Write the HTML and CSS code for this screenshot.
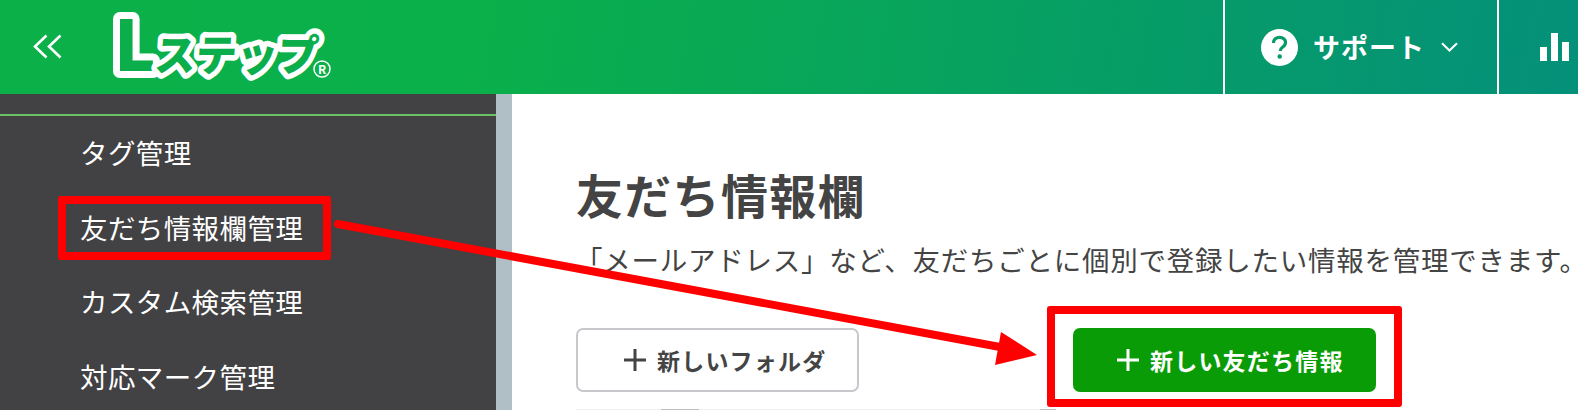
FILE: index.html
```html
<!DOCTYPE html>
<html lang="ja">
<head>
    <meta charset="UTF-8">
    <meta name="viewport" content="width=device-width, initial-scale=1.0">
    <title>友だち情報欄</title>
    <link rel="stylesheet" href="styles.css">
</head>
<body>
    <header class="topbar">
        <button class="collapse-btn" type="button" aria-label="閉じる">
            <svg width="30" height="25" viewBox="0 0 30 25" fill="none" stroke="#fff" stroke-width="2.6">
                <path d="M13.5 1.5 2 12.5l11.5 11"/>
                <path d="M27.5 1.5 16 12.5l11.5 11"/>
            </svg>
        </button>
        <svg class="logo" width="222" height="68" viewBox="0 0 222 68">
            <text class="logo-mark" x="2" y="59">L</text>
            <text class="logo-kana" x="46" y="59" transform="skewX(-4)" textLength="164" lengthAdjust="spacingAndGlyphs">ステップ</text>
            <circle cx="210" cy="57" r="8" fill="none" stroke="#fff" stroke-width="1.500"/>
            <text class="logo-reg" x="206" y="61.500">R</text>
        </svg>
        <div class="topbar-cell support-cell">
            <svg width="37" height="37" viewBox="0 0 37 37">
                <circle cx="18.5" cy="18.5" r="18.5" fill="#fff"/>
                <path d="M12.5 14c0-3.6 2.6-5.7 6-5.7s6 2 6 5.1c0 2.6-1.500 3.800-3 4.900-1.500 1.100-2.300 1.900-2.300 3.700" fill="none" stroke="#069a6a" stroke-width="3.200"/>
                <circle cx="18.700" cy="27.500" r="2.200" fill="#069a6a"/>
            </svg>
            <span class="support-label">サポート</span>
            <svg class="chevron" width="17" height="10" viewBox="0 0 17 10" fill="none" stroke="#fff" stroke-width="2">
                <path d="M1 1.200 8.500 8.500 16 1.200"/>
            </svg>
        </div>
        <div class="topbar-cell stats-cell">
            <div class="bars">
                <span class="bar bar-low"></span>
                <span class="bar bar-high"></span>
                <span class="bar bar-mid"></span>
            </div>
        </div>
    </header>

    <div class="layout">
        <aside class="sidebar">
            <ul class="side-menu">
                <li>タグ管理</li>
                <li>友だち情報欄管理</li>
                <li>カスタム検索管理</li>
                <li>対応マーク管理</li>
            </ul>
        </aside>
        <div class="sidebar-edge"></div>

        <main class="content">
            <h1 class="page-title">友だち情報欄</h1>
            <p class="page-lead">「メールアドレス」など、友だちごとに個別で登録したい情報を管理できます。</p>

            <div class="actions">
                <button class="btn btn-folder" type="button">
                    <svg width="22" height="22" viewBox="0 0 22 22"><path d="M11 0v22M0 11h22" stroke="#444" stroke-width="3"/></svg>
                    新しいフォルダ
                </button>
                <button class="btn btn-add" type="button">
                    <svg width="22" height="22" viewBox="0 0 22 22"><path d="M11 0v22M0 11h22" stroke="#fff" stroke-width="3"/></svg>
                    新しい友だち情報
                </button>
            </div>

            <div class="list-head">
                <span class="list-gap"></span>
                <span class="list-check"></span>
                <span class="list-name">友だち情報欄名</span>
                <span class="list-check list-check-end"></span>
            </div>
        </main>
    </div>

    <!-- 赤枠と矢印 -->
    <div class="mark mark-menu"></div>
    <div class="mark mark-add"></div>
    <svg class="mark-arrow" width="1578" height="410" viewBox="0 0 1578 410">
        <path d="M338 224 1000 347" stroke="#f00" stroke-width="8" stroke-linecap="round"/>
        <path d="M1001 332 1037 355 995 365Z" fill="#f00"/>
    </svg>
</body>
</html>
```

FILE: styles.css
```css
* {
    box-sizing: border-box;
    font-family: "Noto Sans CJK JP", "Noto Sans", sans-serif;
}
html, body {
    height: 410px;
    overflow: hidden;
}
body {
    margin: 0;
    position: relative;
    background-color: white;
    color: #444;
}

/* ヘッダー */
.topbar {
    display: flex;
    align-items: stretch;
    height: 94px;
    background: linear-gradient(100deg, #0bb049 0%, #0ab04a 30%, #04907a 100%);
}
.collapse-btn {
    width: 112px;
    padding: 0 0 2px 33px;
    background: none;
    border: none;
    display: flex;
    align-items: center;
}
.logo {
    margin-top: 12px;
    overflow: visible;
}
.logo text {
    font-weight: 900;
    stroke: white;
    stroke-linejoin: round;
    paint-order: stroke;
    fill: #0bae4a;
}
.logo-mark {
    font-size: 70px;
    stroke-width: 14px;
}
.logo-kana {
    font-size: 43px;
    stroke-width: 11px;
}
.logo .logo-reg {
    font-size: 12px;
    font-weight: 700;
    fill: white;
    stroke: none;
}
.topbar-cell {
    display: flex;
    align-items: center;
    border-left: 2px solid white;
}
.support-cell {
    margin-left: auto;
    width: 274px;
    padding-left: 36px;
}
.support-label {
    margin: -2px 0 0 15px;
    color: white;
    font-size: 27px;
    font-weight: 700;
    letter-spacing: 1px;
    white-space: nowrap;
}
.chevron {
    margin-left: 16px;
}
.stats-cell {
    width: 81px;
    padding-left: 41px;
}
.bars {
    display: flex;
    align-items: flex-end;
    gap: 4px;
    height: 28px;
    margin-top: -1px;
}
.bar {
    display: block;
    width: 7px;
    background-color: white;
}
.bar-low { height: 14px; }
.bar-high { height: 28px; }
.bar-mid { height: 19px; }

/* レイアウト */
.layout {
    display: flex;
    height: 316px;
}
.sidebar {
    width: 496px;
    padding-top: 20px;
    background-color: #424143;
}
.sidebar-edge {
    width: 16px;
    background-color: #b0bec5;
}
.side-menu {
    margin: 0;
    padding: 0;
    list-style: none;
    border-top: 2px solid #6cc264;
}
.side-menu li {
    height: 74.5px;
    padding: 0 0 2px 80px;
    display: flex;
    align-items: center;
    color: white;
    font-size: 27.5px;
    letter-spacing: 0.4px;
}

/* メイン */
.content {
    flex: 1;
    padding: 70px 0 0 64px;
    min-width: 0;
}
.page-title {
    margin: 0;
    font-size: 47px;
    line-height: 60px;
    font-weight: 700;
    letter-spacing: 1.3px;
}
.page-lead {
    margin: 15px 0 0 -1px;
    font-size: 27.5px;
    line-height: 40px;
    letter-spacing: 0.75px;
    white-space: nowrap;
}
.actions {
    display: flex;
    gap: 214px;
    margin-top: 49px;
}
.btn {
    height: 64px;
    display: flex;
    align-items: center;
    gap: 11px;
    font-size: 23px;
    font-weight: 700;
    letter-spacing: 1.2px;
    border-radius: 7px;
    cursor: pointer;
}
.btn-folder {
    width: 283px;
    padding-left: 46px;
    background-color: white;
    color: #444;
    border: 2px solid #c8c8cc;
}
.btn-add {
    width: 303px;
    padding-left: 44px;
    background-color: #0a9c07;
    color: white;
    border: none;
}

.list-head {
    display: flex;
    width: 480px;
    height: 40px;
    margin-top: 17px;
    background-color: #f0f0f0;
}
.list-gap {
    width: 85px;
}
.list-check {
    width: 38px;
    height: 40px;
    background-color: #bdbdc2;
}
.list-check-end {
    width: 16px;
}
.list-name {
    flex: 1;
    padding: 0 0 0 22px;
    font-size: 25px;
    line-height: 30px;
    letter-spacing: 3px;
}

/* 注釈 */
.mark {
    position: absolute;
    border: 8px solid #f00;
    border-radius: 3px;
}
.mark-menu {
    left: 58px;
    top: 196px;
    width: 273px;
    height: 64px;
}
.mark-add {
    left: 1047px;
    top: 306px;
    width: 355px;
    height: 101px;
}
.mark-arrow {
    position: absolute;
    left: 0;
    top: 0;
    pointer-events: none;
}
```
